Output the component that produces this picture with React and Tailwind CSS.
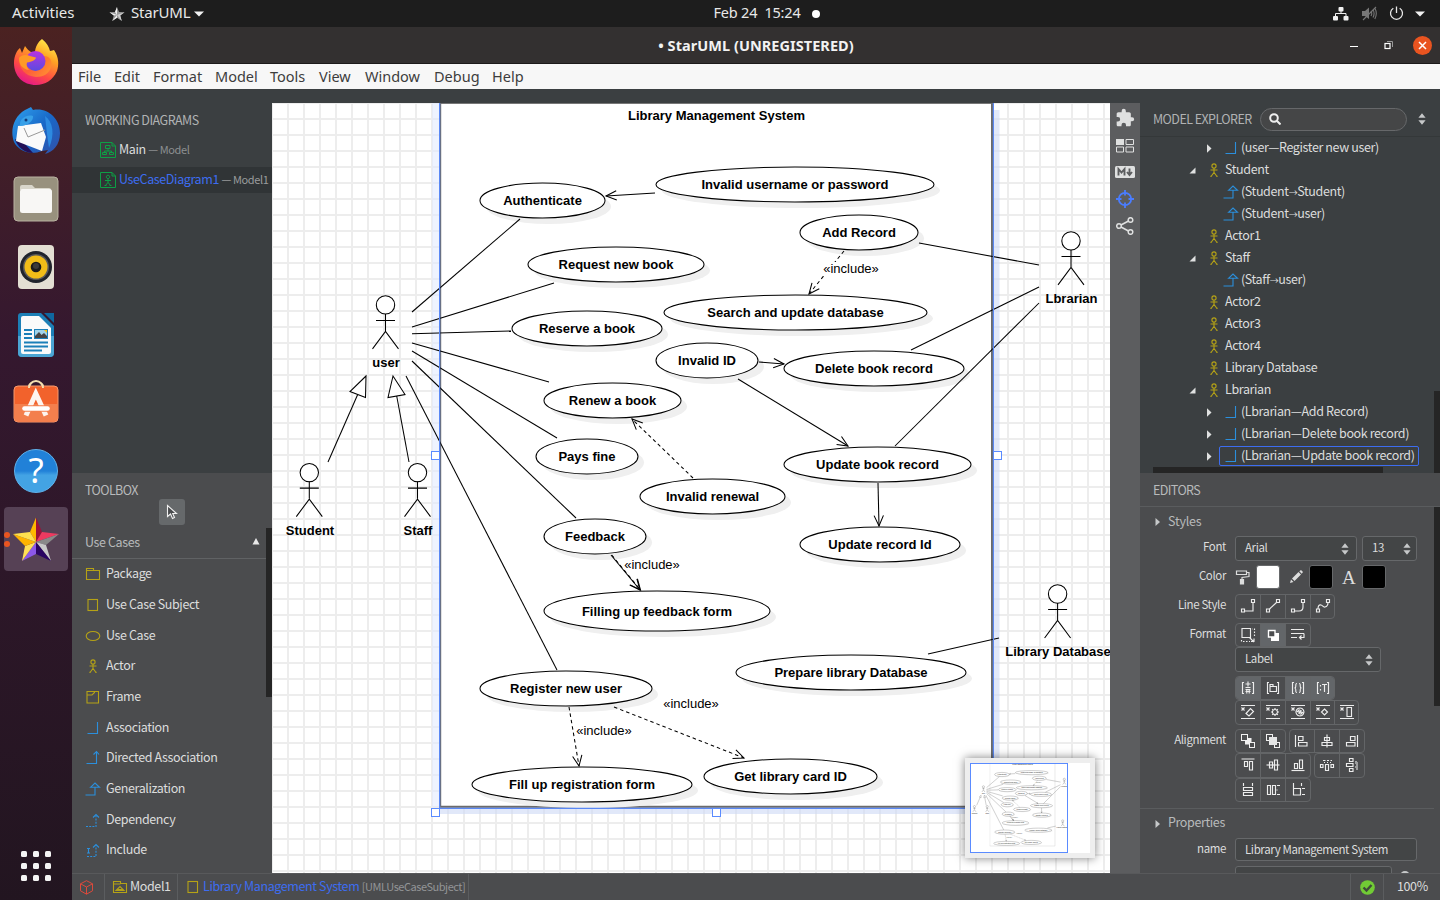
import React from "react";

const SANS = "font-['Noto_Sans_CJK_SC',sans-serif]";
const UBU = "font-['Noto_Sans',sans-serif]";

/* ---------- diagram data ---------- */

const useCases = [
  ["Authenticate", 480, 605, 183, 218],
  ["Invalid username or password", 656, 934, 167, 202],
  ["Request new book", 528, 704, 247, 282],
  ["Reserve a book", 512, 662, 311, 346],
  ["Add Record", 800, 918, 215, 250],
  ["Search and update database", 664, 927, 295, 330],
  ["Invalid ID", 656, 758, 343, 378],
  ["Delete book record", 784, 964, 351, 386],
  ["Renew a book", 544, 681, 383, 418],
  ["Pays fine", 536, 638, 439, 474],
  ["Update book record", 784, 971, 447, 482],
  ["Invalid renewal", 640, 785, 479, 514],
  ["Feedback", 544, 646, 519, 554],
  ["Update record Id", 800, 960, 527, 562],
  ["Filling up feedback form", 544, 770, 591, 631],
  ["Register new user", 480, 652, 671, 706],
  ["Prepare library Database", 736, 966, 655, 690],
  ["Get library card ID", 704, 877, 759, 794],
  ["Fill up registration form", 472, 692, 767, 802],
];

const actors = [
  ["user", 385.5, 304.9, 386],
  ["Student", 309.3, 472.6, 310],
  ["Staff", 417.5, 472.6, 418],
  ["Lbrarian", 1071, 240.9, 1071.5],
  ["Library Database", 1057.6, 594, 1058],
];

const associations = [
  [412, 312, 520, 219],
  [412, 327, 554, 283],
  [412, 333.7, 511, 331],
  [412, 343, 549, 382],
  [412, 351, 557, 438],
  [412, 361, 576, 518],
  [406, 376, 557, 670],
  [919, 243, 1039, 265],
  [911, 350, 1039, 287],
  [895, 446, 1039, 303],
  [928, 654, 999, 638],
  [328, 462, 357.7, 394.5],
  [409, 462, 396.7, 396],
];

const arrows = [
  [655, 193, 606, 196, false],
  [844, 251, 809, 294, true],
  [759, 362, 784, 364, false],
  [738, 379, 848, 446, false],
  [878, 483, 879, 526, false],
  [693, 478, 632, 419, true],
  [611, 555, 640, 590, false],
  [611.7, 555, 640.5, 590, true],
  [569, 707, 579, 766, true],
  [614, 707, 744, 758, true],
];

const includes = [
  [851, 273],
  [652, 569],
  [604, 735],
  [691, 708],
];

function headPath(x1, y1, x2, y2) {
  const a = Math.atan2(y1 - y2, x1 - x2);
  const p = (d) => `${x2 + 11.5 * Math.cos(a + d)},${y2 + 11.5 * Math.sin(a + d)}`;
  return `M${p(0.42)} L${x2},${y2} L${p(-0.42)}`;
}

function Diagram({ thin = 1.05, frame = "#6b6b6b" }) {
  return (
    <g>
      <rect x="440" y="103.5" width="552.5" height="703" fill="#fff" />
      <path d="M440.5 103.5H992" stroke="#777" strokeWidth="1" />
      <path d="M440.5 103V807" stroke={frame} strokeWidth="1.4" />
      <path d="M992 103V807" stroke={frame} strokeWidth="2" />
      <path d="M440 806.8H993" stroke={frame} strokeWidth="2" />
      {useCases.map(([t, l, r, a, b]) => (
        <g key={t}>
          <ellipse cx={(l + r) / 2 + 6} cy={(a + b) / 2 + 6} rx={(r - l) / 2} ry={(b - a) / 2} fill="#efefef" />
          <ellipse cx={(l + r) / 2} cy={(a + b) / 2} rx={(r - l) / 2} ry={(b - a) / 2} fill="#fff" stroke="#000" strokeWidth={thin} />
        </g>
      ))}
      <g stroke="#000" strokeWidth={thin} fill="none">
        {associations.map((l, i) => (
          <line key={i} x1={l[0]} y1={l[1]} x2={l[2]} y2={l[3]} />
        ))}
        {arrows.map(([a, b, c, d, dash], i) => (
          <g key={i}>
            <line x1={a} y1={b} x2={c} y2={d} strokeDasharray={dash ? "3.5 3" : undefined} />
            <path d={headPath(a, b, c, d)} />
          </g>
        ))}
        <path d="M366 376L350 391.5L365.5 397.5Z" fill="#fff" />
        <path d="M393 376L388 397.5L405 394.5Z" fill="#fff" />
        {actors.map(([t, x, y]) => (
          <g key={t}>
            <circle cx={x} cy={y} r="9.2" fill="#fff" />
            <path d={`M${x} ${y + 9}V${y + 26}M${x - 9.5} ${y + 15.5}H${x + 9.5}M${x - 13} ${y + 44}L${x} ${y + 26.5}L${x + 13} ${y + 44}`} />
          </g>
        ))}
      </g>
      <g fontFamily="'Liberation Sans', Arial, sans-serif" fontSize="13" textAnchor="middle" fill="#000">
        <g fontWeight="700">
          <text x="716.5" y="120">Library Management System</text>
          {useCases.map(([t, l, r, a, b]) => (
            <text key={t} x={(l + r) / 2} y={(a + b) / 2 + 4.5}>{t}</text>
          ))}
          {actors.map(([t, , y, lx]) => (
            <text key={t} x={lx} y={Math.round(y + 62)}>{t}</text>
          ))}
        </g>
        <rect x="823" y="262" width="56" height="14" fill="#fff" />
        {includes.map(([x, y]) => (
          <text key={x} x={x} y={y}>«include»</text>
        ))}
      </g>
    </g>
  );
}

function Canvas() {
  return (
    <div className="relative h-[770px] w-[838px] shrink-0 overflow-hidden bg-white">
      <svg width="838" height="770" viewBox="272 103 838 770" className="block">
        <defs>
          <pattern id="grid" x="271" y="102" width="16" height="16" patternUnits="userSpaceOnUse">
            <path d="M1 0V16M0 1H16" stroke="#ededed" strokeWidth="2" fill="none" />
          </pattern>
        </defs>
        <rect x="272" y="103" width="838" height="770" fill="#fff" />
        <rect x="272" y="103" width="838" height="770" fill="url(#grid)" />
        <rect x="432" y="103" width="8" height="704" fill="#e0e9ff" fillOpacity="0.55" />
        <rect x="993" y="110" width="6.500" height="704" fill="#cdd8f5" fillOpacity="0.6" />
        <rect x="440" y="807" width="553" height="7" fill="#cdd8f5" fillOpacity="0.6" />
        <Diagram />
        <path d="M439.6 103V808.3H993.4V103" fill="none" stroke="#5a88f5" strokeWidth="1.2" />
        {[[435.5, 455.5], [997.5, 455.5], [435.5, 812.5], [716.5, 812.5]].map(([x, y]) => (
          <rect key={x + "-" + y} x={x - 4} y={y - 4} width="8" height="8" fill="#fff" stroke="#5a8bff" />
        ))}
      </svg>
      <div className="absolute left-[693px] top-[655px] h-[100px] w-[130px] bg-[#eeeeee] p-[5px] shadow-[0_0_9px_rgba(0,0,0,0.5)]">
        <div className="relative h-[90px] w-[120px] bg-white">
          <svg width="98" height="90" viewBox="272 103 830 763" className="block opacity-70">
            <Diagram thin={2.2} frame="#888" />
          </svg>
          <div className="absolute left-0 top-0 h-[90px] w-[98px] border border-[#5a8bff]" />
        </div>
      </div>
    </div>
  );
}

/* ---------- UML icons (16px) ---------- */

const Y = "#b5a216";
const B = "#2b8fdc";

function Uml({ kind, className = "" }) {
  const shapes = {
    package: <path d="M1.5 4.5V13.5H14.5V4.5H8.5V2.5H1.5V4.5H8.5" stroke={Y} />,
    subject: <rect x="3" y="2.5" width="9.5" height="11" stroke={Y} />,
    usecase: <ellipse cx="8" cy="8" rx="6.8" ry="4.5" stroke={Y} />,
    actor: (
      <g stroke={Y}>
        <circle cx="8" cy="4" r="2.1" />
        <path d="M8 6.2V10.5M4.5 8H11.5M5 14.5L8 10.5L11 14.5M4.2 14.3H6M10 14.3H11.8" />
      </g>
    ),
    frame: <path d="M2 2.5H13.5V14H2ZM2 6H7L9.5 3.5V2.5" stroke={Y} />,
    association: <path d="M2.5 13.5H12.5V2" stroke={B} />,
    directed: <path d="M1.5 13.5H11.5V1.5M8.5 4.5L11.5 1.5L14 4.5" stroke={B} />,
    generalization: <path d="M.5 14H10V6.3M5.5 6.3L10 2L14.5 6.3Z" stroke={B} />,
    dependency: (
      <g stroke={B}>
        <path d="M1 14.5H11V3" strokeDasharray="2 1.2" />
        <path d="M8 5.5L11 2.5L14 5.5" />
      </g>
    ),
    include: (
      <g stroke={B}>
        <path d="M2 14.5H11V3" strokeDasharray="2 1.2" />
        <path d="M8 5.5L11 2.5L14 5.5M2 6.5H5M3.5 6.5V11M2 11H5" />
      </g>
    ),
    model: <path d="M1.5 5V13.5H14.5V4.5H8.5V2.5H1.5V5H8.5M4 11.5L8 7.5L12 11.5ZM5 10.5H11" stroke={Y} />,
  };
  return (
    <svg width="16" height="16" viewBox="0 0 16 16" fill="none" strokeWidth="1.1" className={"shrink-0 " + className}>
      {shapes[kind]}
    </svg>
  );
}

function DiagramIcon({ actor }) {
  return (
    <svg width="16" height="16" viewBox="0 0 16 16" fill="none" stroke="#0d9f45" strokeWidth="1" className="shrink-0">
      <path d="M.5 .5H12L15.5 4V15.5H.5ZM12 .5V4H15.5" />
      {actor ? (
        <path d="M8 3.2a1.7 1.7 0 1 1-.01 0M8 6.6V10.3M5 8.5H11M5.5 13.5L8 10.3L10.5 13.5M4.5 13.5H6.5M9.5 13.5H11.5" />
      ) : (
        <path d="M5.5 3.5H10V6.5H5.5ZM8 6.5V9M4.5 10.5V9H11.5V10.5M2.5 10.5H6.5V12.5H2.5ZM9.5 10.5H13.5V12.5H9.5Z" />
      )}
    </svg>
  );
}

/* ---------- desktop chrome ---------- */

function TopBar() {
  return (
    <header className={"grid h-[27px] grid-cols-3 items-center bg-[#1d1d1d] text-[15px] leading-[25px] text-[#e8e8e8] " + UBU}>
      <div className="flex items-center">
        <span className="mb-[2px] ml-[12px] w-[97px] tracking-[0px]">Activities</span>
        <svg width="16" height="16" viewBox="0 0 16 16" className="mr-[6px]">
          <path d="M8 1L10 6L15.5 6.2L11.2 9.6L12.8 15L8 11.8L3.2 15L4.8 9.6L.5 6.2L6 6Z" fill="#9a9a9a" />
          <path d="M8 1V9L6 6ZM.5 6.2L8 9L4.8 9.6ZM3.2 15L8 9V11.8Z" fill="#f2f2f2" />
          <path d="M8 9L15.5 6.2L11.2 9.6L12.8 15Z" fill="#cfcfcf" />
        </svg>
        <span className="mb-[2px] tracking-[-0.2px]">StarUML</span>
        <svg width="10" height="6" viewBox="0 0 10 6" className="ml-[4px]"><path d="M0 .5H10L5 5.500Z" fill="#f2f2f2" /></svg>
      </div>
      <div className="flex items-center justify-center pl-[94px]">
        <span className="mb-[2px] whitespace-pre text-[14.500px] tracking-[-0.2px]">Feb 24  15:24</span>
        <span className="ml-[12px] h-2 w-2 rounded-full bg-white" />
      </div>
      <div className="flex items-center justify-end pr-[15px]">
        <svg width="16" height="14" viewBox="0 0 16 14" className="mr-[13px]">
          <g fill="#f2f2f2"><rect x="5.5" y="0" width="5" height="4.5" rx="1" /><rect x="0" y="9" width="5" height="4.5" rx="1" /><rect x="10.5" y="9" width="5" height="4.5" rx="1" /></g>
          <path d="M8 4V6.5M2.5 9V6.5H13V9" stroke="#f2f2f2" fill="none" />
        </svg>
        <svg width="15" height="15" viewBox="0 0 15 15" className="mr-[12px]">
          <path d="M0 5H3L7 1.5V13L3 10H0Z" fill="#777" />
          <path d="M9 5Q10.5 7.5 9 10M11 3.5Q13.2 7.5 11 11.5M12.8 2Q15.8 7.5 12.8 13M1 14L14 1" stroke="#777" fill="none" strokeWidth="1.1" />
        </svg>
        <svg width="15" height="15" viewBox="0 0 15 15" className="mr-[11px]" fill="none" stroke="#e8e8e8" strokeWidth="1.3">
          <path d="M4.3 2.2A6 6 0 1 0 10.7 2.2M7.5 .5V7" />
        </svg>
        <svg width="10" height="6" viewBox="0 0 10 6"><path d="M0 .5H10L5 5.5Z" fill="#f2f2f2" /></svg>
      </div>
    </header>
  );
}

function Firefox() {
  return (
    <svg width="46" height="48" viewBox="0 0 46 48">
      <defs>
        <linearGradient id="ff1" x1=".8" y1="0" x2=".3" y2="1"><stop offset="0" stopColor="#fff44f" /><stop offset=".35" stopColor="#ffa224" /><stop offset=".7" stopColor="#ff4a45" /><stop offset="1" stopColor="#e3168b" /></linearGradient>
        <linearGradient id="ff2" x1="0" y1="0" x2="0" y2="1"><stop offset="0" stopColor="#b833e1" /><stop offset="1" stopColor="#5b4be0" /></linearGradient>
        <linearGradient id="ff3" x1="0" y1="0" x2="1" y2="1"><stop offset="0" stopColor="#ff8a1e" /><stop offset=".5" stopColor="#ff6a30" /><stop offset="1" stopColor="#ffb02c" /></linearGradient>
      </defs>
      <path d="M29 1C34 5 36 9 37 13C39 13 40 12 41 12C46 19 46 27 44 33C40 42 32 47 23 47C10 47 1 38 1 25C1 18 4 12 7 10L9 15L12 8C14 11 16 13 18 14L22 15C22 9 25 4 29 1Z" fill="url(#ff1)" />
      <path d="M6 20C11 15 15 18 23 20C36 14 40 22 38 29C36 36 30 39 23 39C12 38 6 31 6 20Z" fill="url(#ff3)" opacity=".7" />
      <circle cx="22.500" cy="23" r="10" fill="url(#ff2)" />
      <path d="M6 20C8 17 13 16 17 18L23 19.500C22.500 22 19 24 14 24.500C13 27 14 30 16 32C9 31 6 26 6 20Z" fill="#ff9a26" />
    </svg>
  );
}

function Thunderbird() {
  return (
    <svg width="50" height="50" viewBox="0 0 50 50">
      <defs><linearGradient id="tb" x1="0" y1="0" x2="1" y2="1"><stop offset="0" stopColor="#2fa3ef" /><stop offset=".5" stopColor="#1968c8" /><stop offset="1" stopColor="#3250a8" /></linearGradient></defs>
      <path d="M14 4L20 1L22 4C36 1 49 12 49 27C49 39 42 46 34 48L37 44L31 45C18 50 7 44 3 36C-1 25 2 11 14 4Z" fill="url(#tb)" />
      <path d="M4 33C6 41 14 47 22 47L14 38Z" fill="#221056" />
      <path d="M7 20L30 17L35 31L31 45L5 35Z" fill="#fafafa" />
      <path d="M13 22L17 31L34 24" fill="none" stroke="#999" />
      <path d="M9 20C8 14 14 8 22 10C23 14 17 20 9 20Z" fill="#38a0e8" />
      <path d="M34 10C42 16 44 28 38 42L36 28Z" fill="#2d8ae0" />
      <circle cx="15" cy="14" r="1.5" fill="#123c7c" />
    </svg>
  );
}

function Files() {
  return (
    <svg width="46" height="46" viewBox="0 0 46 46">
      <rect x="1" y="1" width="44" height="44" rx="4" fill="#98917e" stroke="#b9b2a1" />
      <path d="M7 14V11Q7 9 9 9H19L22 12H36Q38 12 38 14Z" fill="#d9d6cb" />
      <rect x="7" y="13" width="32" height="24" rx="2.5" fill="#f8f7f5" />
    </svg>
  );
}

function Rhythmbox() {
  return (
    <svg width="38" height="46" viewBox="0 0 38 46">
      <rect x="1" y="1" width="36" height="44" rx="4" fill="#e3dfd3" />
      <circle cx="19" cy="23" r="16" fill="#20242c" />
      <circle cx="19" cy="23" r="13" fill="#5b5b5b" />
      <circle cx="19" cy="23" r="11.5" fill="#f1bd18" />
      <circle cx="19" cy="23" r="5.3" fill="#1b1b1b" />
      <circle cx="19" cy="22" r="3" fill="#3a3a3a" />
    </svg>
  );
}

function Writer() {
  return (
    <svg width="38" height="46" viewBox="0 0 38 46">
      <path d="M4 1H24L37 14V41Q37 45 33 45H5Q1 45 1 41V4Q1 1 4 1Z" fill="#1c7fb6" />
      <path d="M1 24H37V41Q37 45 33 45H5Q1 45 1 41Z" fill="#4ba5d3" />
      <path d="M6 4H22L34 16V40Q34 42 32 42H6Q4 42 4 40V6Q4 4 6 4Z" fill="#fafafa" />
      <path d="M27 1H37V11Z" fill="#0f679f" />
      <path d="M7 18H15M7 22H15M7 26H15M7 30.500H31M7 34.500H31M7 38.500H25" stroke="#1b7fb8" strokeWidth="2" />
      <rect x="17" y="17" width="14" height="10" fill="#1b7fb8" /><rect x="18" y="18" width="12" height="8" fill="#9fd3ea" />
      <path d="M18 26V24L22 20L24.500 23L27 21L30 24V26Z" fill="#444" /><path d="M27 18H30V21Z" fill="#f5c211" />
    </svg>
  );
}

function Software() {
  return (
    <svg width="46" height="44" viewBox="0 0 46 44">
      <path d="M16 11C15 -1 31 -1 30 11" fill="none" stroke="#f4dfb0" strokeWidth="2" />
      <rect x="1" y="7" width="44" height="36" rx="4" fill="#f2622c" stroke="#f79a6e" />
      <path d="M1.500 25H44.500V39Q44.500 42.500 41 42.500H5Q1.500 42.500 1.500 39Z" fill="#f37f4d" />
      <path d="M16 9C16 7 16 6 17 5M30 9C30 7 30 6 29 5" stroke="#f4dfb0" strokeWidth="2" fill="none" />
      <path d="M13 36.500L22.800 14.500L33 36.500" fill="none" stroke="#fdf4ef" strokeWidth="5" />
      <path d="M10.500 29.500H35.500" stroke="#f37f4d" strokeWidth="6.400" strokeLinecap="round" />
      <path d="M11.500 29.500H34.500" stroke="#fff" strokeWidth="4.600" strokeLinecap="round" />
    </svg>
  );
}

function Help() {
  return (
    <div className="flex h-[44px] w-[44px] items-center justify-center rounded-full border border-[#5fb2ec] bg-linear-to-b from-[#2181d8] from-50% to-[#43a3e4] to-60% font-['Noto_Sans',sans-serif] text-[35px] leading-none text-white">
      <span className="-mt-1">?</span>
    </div>
  );
}

function Star() {
  return (
    <svg width="46" height="46" viewBox="0 0 46 46" className="mt-[2px]">
      <g>
        <path d="M23 .5V25L17 15Z" fill="#ffb800" /><path d="M23 .5V25L29 15Z" fill="#9c1138" />
        <path d="M29 15L46 17L23 25Z" fill="#ee3a60" /><path d="M46 17L33 28L23 25Z" fill="#898989" />
        <path d="M33 28L38 44L23 25Z" fill="#c9c9c9" /><path d="M38 44L23 37V25Z" fill="#2a0562" />
        <path d="M23 25V37L9 44Z" fill="#8c58e8" /><path d="M23 25L9 44L12 29Z" fill="#ffdf57" />
        <path d="M23 25L12 29L0 17Z" fill="#ffb300" /><path d="M0 17L17 15L23 25Z" fill="#ffe04f" />
      </g>
    </svg>
  );
}

function Dock() {
  return (
    <nav className="flex w-[72px] shrink-0 flex-col items-center bg-linear-to-b from-[#4b2221] via-[#35182f] via-35% to-[#221520] pt-[2px]">
      <div className="flex h-[66px] items-center"><Firefox /></div>
      <div className="flex h-[72px] items-center"><Thunderbird /></div>
      <div className="flex h-[64px] items-center"><Files /></div>
      <div className="flex h-[72px] items-center"><Rhythmbox /></div>
      <div className="flex h-[64px] items-center"><Writer /></div>
      <div className="flex h-[68px] items-center"><Software /></div>
      <div className="flex h-[72px] items-center"><Help /></div>
      <div className="relative flex h-[64px] w-[64px] items-center justify-center rounded-[4px] bg-[#564155]">
        <Star />
        <span className="absolute left-0 top-[25px] h-[6px] w-[6px] rounded-full bg-[#e95420]" />
        <span className="absolute left-0 top-[34px] h-[6px] w-[6px] rounded-full bg-[#e95420]" />
      </div>
      <div className="mt-auto mb-[19px] grid grid-cols-3 gap-[6px]">
        {Array.from({ length: 9 }, (_, i) => (
          <span key={i} className="h-[6px] w-[6px] rounded-[1.500px] bg-[#f4f4f4]" />
        ))}
      </div>
    </nav>
  );
}

function TitleBar() {
  return (
    <div className={"relative flex h-[37px] items-center border-b border-[#1c1a1a] bg-[#333030] text-[14.500px] font-bold text-[#f2f2f2] " + UBU}>
      <span className="mt-[1px] flex-1 text-center tracking-[0.050px]">• StarUML (UNREGISTERED)</span>
      <div className="absolute right-[8px] flex items-center">
        <span className="mr-[26px] mt-[3px] h-[1.500px] w-[8px] bg-white" />
        <svg width="9" height="9" viewBox="0 0 9 9" className="mr-[20px]" fill="none"><path d="M3 .5H8.500V6" stroke="#999" /><rect x="1" y="2.500" width="5" height="5" stroke="#fff" strokeWidth="1.200" /></svg>
        <span className="flex h-[19px] w-[19px] items-center justify-center rounded-full bg-[#e95420]">
          <svg width="9" height="9" viewBox="0 0 9 9" stroke="#fff" strokeWidth="1.500"><path d="M1 1L8 8M8 1L1 8" /></svg>
        </span>
      </div>
    </div>
  );
}

function MenuBar() {
  return (
    <div className={"flex h-[25px] items-center bg-[#f7f7f7] pl-[6px] text-[14.500px] leading-[25px] text-[#3d3d3d] " + UBU}>
      <span className="w-[36px]">File</span>
      <span className="w-[39px]">Edit</span>
      <span className="w-[62px]">Format</span>
      <span className="w-[55px]">Model</span>
      <span className="w-[49px]">Tools</span>
      <span className="w-[46px]">View</span>
      <span className="w-[69px]">Window</span>
      <span className="w-[58px]">Debug</span>
      <span>Help</span>
    </div>
  );
}

/* ---------- left column ---------- */

const tools = [
  ["package", "Package"],
  ["subject", "Use Case Subject"],
  ["usecase", "Use Case"],
  ["actor", "Actor"],
  ["frame", "Frame"],
  ["association", "Association"],
  ["directed", "Directed Association"],
  ["generalization", "Generalization"],
  ["dependency", "Dependency"],
  ["include", "Include"],
];

function LeftColumn() {
  return (
    <aside className="flex w-[200px] shrink-0 flex-col text-[12.500px] tracking-[-0.380px] text-[#dcdddd]">
      <section className="h-[384px] bg-[#3b3f41] pt-[21px]">
        <h2 className="pl-[13px] leading-[20px] tracking-[-0.500px] text-[#b0b2b3]">WORKING DIAGRAMS</h2>
        <div className="mt-[7px] flex h-[26px] items-center gap-[3px] pl-[28px]">
          <DiagramIcon />
          <span className="mb-[2px]">Main <span className="text-[11px] text-[#8d9091]">— Model</span></span>
        </div>
        <div className="mt-[4px] flex h-[26px] items-center gap-[3px] whitespace-nowrap bg-[#303436] pl-[28px] text-[#3d6df0]">
          <DiagramIcon actor />
          <span className="mb-[2px]">UseCaseDiagram1 <span className="text-[11px] text-[#9a9c9d]">— Model1</span></span>
        </div>
      </section>
      <section className="h-[400px] overflow-hidden bg-[#4b4c4e]">
        <h2 className="pl-[13px] pt-[7px] leading-[20px] tracking-[-0.600px] text-[#b8babb]">TOOLBOX</h2>
        <div className="ml-[87px] mt-[-1px] flex h-[26px] w-[26px] items-center justify-center rounded-[3px] bg-[#66696b]">
          <svg width="12" height="16" viewBox="0 0 12 16"><path d="M1.500 1.500V12.500L4.500 10L6.500 14.500L8.500 13.500L6.700 9.500H10.500Z" fill="#4a4c4e" stroke="#f0f0f0" strokeWidth="1.100" /></svg>
        </div>
        <div className="flex">
          <div className="w-[194px]">
            <div className="flex h-[34px] items-center justify-between border-b border-[#606264] pl-[13px] pr-[6px]">
              <span className="mt-[1px] text-[#b8babb]">Use Cases</span>
              <svg width="8" height="7" viewBox="0 0 8 7" className="mb-[1px]"><path d="M4 0L7.500 6.500H.5Z" fill="#e8e8e8" /></svg>
            </div>
            {tools.map(([k, t]) => (
              <div key={t} className="flex h-[30.670px] items-center gap-[5px] pl-[13px]">
                <Uml kind={k} />
                <span className="mb-[1px]">{t}</span>
              </div>
            ))}
          </div>
          <div className="mt-[3px] h-[169px] w-[6px] bg-[#252525]" />
        </div>
      </section>
    </aside>
  );
}

/* ---------- right column ---------- */

function SideTools() {
  return (
    <div className="flex w-[30px] shrink-0 flex-col items-center bg-[#5c5d5f] pt-[5px]">
      <svg width="20" height="20" viewBox="0 0 24 24" className="mb-[11px]" fill="#dfe0e0"><path d="M20.500 11H19V7c0-1.100-.9-2-2-2h-4V3.500a2.500 2.500 0 0 0-5 0V5H4c-1.100 0-2 .9-2 2v3.800h1.500a2.700 2.700 0 0 1 0 5.400H2V20c0 1.100.9 2 2 2h3.800v-1.500a2.700 2.700 0 0 1 5.400 0V22H17c1.100 0 2-.9 2-2v-4h1.500a2.500 2.500 0 0 0 0-5z" /></svg>
      <svg width="18" height="14" viewBox="0 0 18 14" className="mb-[13px]" fill="none" stroke="#dfe0e0"><path d="M10 .5H17.500V5.500H10ZM.5 8H7.500V13H.5ZM10 8H17.500V13H10Z" /><rect x=".5" y=".5" width="7" height="5" fill="#dfe0e0" /></svg>
      <svg width="20" height="12" viewBox="0 0 20 12" className="mb-[12px]"><rect width="20" height="12" rx="1.500" fill="#dfe0e0" /><path d="M3.500 9.500V3L6.500 6.500L9.500 3V9.500M14.500 2.500V8M12 6L14.500 9L17 6" fill="none" stroke="#5c5d5f" strokeWidth="1.900" /></svg>
      <svg width="18" height="18" viewBox="0 0 18 18" className="mb-[9px]" fill="none" stroke="#4a7dff" strokeWidth="1.800"><circle cx="9" cy="9" r="6.200" /><path d="M9 0V5.500M9 12.500V18M0 9H5.500M12.500 9H18" /></svg>
      <svg width="18" height="18" viewBox="0 0 18 18" fill="none" stroke="#dfe0e0" strokeWidth="1.500"><circle cx="3" cy="9" r="2.300" /><circle cx="14.500" cy="3" r="2.300" /><circle cx="14.500" cy="15" r="2.300" /><path d="M5 8L12.500 4M5 10L12.500 14" /></svg>
    </div>
  );
}

const tree = [
  [2, "right", "association", "(user—Register new user)"],
  [1, "down", "actor", "Student"],
  [2, "", "generalization", "(Student→Student)"],
  [2, "", "generalization", "(Student→user)"],
  [1, "", "actor", "Actor1"],
  [1, "down", "actor", "Staff"],
  [2, "", "generalization", "(Staff→user)"],
  [1, "", "actor", "Actor2"],
  [1, "", "actor", "Actor3"],
  [1, "", "actor", "Actor4"],
  [1, "", "actor", "Library Database"],
  [1, "down", "actor", "Lbrarian"],
  [2, "right", "association", "(Lbrarian—Add Record)"],
  [2, "right", "association", "(Lbrarian—Delete book record)"],
  [2, "right", "association", "(Lbrarian—Update book record)"],
];

function TreeText({ text }) {
  const [a, b] = text.split("→");
  if (b === undefined) return <span className="mb-[2px]">{text}</span>;
  return (
    <span className="mb-[2px]">{a}<span className="text-[9px]">→</span>{b}</span>
  );
}

function Updown({ className = "" }) {
  return (
    <svg width="8" height="12" viewBox="0 0 8 12" className={"shrink-0 " + className}>
      <path d="M4 .3L7.600 4.700H.4ZM4 11.700L7.600 7.300H.4Z" fill="#c6c8c9" />
    </svg>
  );
}

function Explorer() {
  return (
    <section className="h-[384px] overflow-hidden bg-[#3b3f41]">
      <div className="flex h-[48px] items-center border-b border-[#343839] pl-[13px] pt-[13px]">
        <h2 className="mt-[1px] w-[107px] whitespace-nowrap tracking-[-0.550px] text-[#b0b2b3]">MODEL EXPLORER</h2>
        <div className="flex h-[23px] w-[147px] items-center rounded-full border border-[#66686a] bg-[#454647] pl-[8px]">
          <svg width="12" height="12" viewBox="0 0 12 12" fill="none" stroke="#eeeeee" strokeWidth="2"><circle cx="5" cy="5" r="3.800" /><path d="M7.800 7.800L11.500 11.500" /></svg>
        </div>
        <Updown className="ml-[11px]" />
      </div>
      <div className="flex h-[330px]">
        <div className="w-[294px] shrink-0">
          {tree.map(([level, open, kind, text], i) => (
            <div key={i} className={"flex h-[22px] items-center whitespace-nowrap " + (level === 2 ? "pl-[66px]" : "pl-[49px]")}>
              <span className="w-[13px] shrink-0">
                {open === "right" && <svg width="6" height="9" viewBox="0 0 6 9"><path d="M1 .3L5.500 4.500L1 8.700Z" fill="#e0e1e1" /></svg>}
                {open === "down" && <svg width="7" height="7" viewBox="0 0 7 7"><path d="M6.500 .5V6.500H.5Z" fill="#e0e1e1" /></svg>}
              </span>
              <span className={"flex items-center rounded-[2px] border " + (level === 2 ? "h-[20px] gap-[2px] pl-[3px] pr-[3px] " : "gap-[3px] pl-[3px] ") + (i === 14 ? "border-[#3d6df0]" : "border-transparent")}>
                <Uml kind={kind} />
                <TreeText text={text} />
              </span>
            </div>
          ))}
        </div>
        <div className="mt-[254px] h-[82px] w-[6px] bg-[#252525]" />
      </div>
      <div className="ml-[13px] h-[6px] w-[230px] bg-[#252525]" />
    </section>
  );
}

const sq = "M1.500 11H4.500V14H1.500ZM11.500 1.500H14.500V4.500H11.500Z";
const cut = "M1 1.500H15M1 14.500H15M1.500 3.500L4.500 6.500M4.500 3.500L1.500 6.500";
const bracket = "M4 2.500H2.500V13.500H4M12 2.500H13.500V13.500H12";
const icons = {
  rect: [sq, "M4.500 13H13V4.500"],
  oblique: [sq, "M4.500 11L11.500 4.500"],
  round: [sq, "M4.500 13H9Q13 13 13 9V4.500"],
  curve: [sq, "M3 11C3 8 4 6.500 6 7C8 7.500 8 9.500 10 9C12 8.500 13 7 13 4.500"],
  resize: ["M2 1.500H10.500V10.500H2Z", "M9.500 10.500L14 15M11 14.500H14V11.500"],
  wrap: ["M1 2.500H14M1 6.500H14M1 10.500H7M14 6.500V10.500H9.500", "M11.500 8.500L9.500 10.500L11.500 12.500"],
  vis: [bracket, "M8 1.500V6.500M5.500 4H10.500M5.500 7.500H10.500M5.500 9.500H10.500M5.500 11.500H10.500M6.800 9V13.500M9.200 9V13.500"],
  ns: [bracket, "M5 4.500H8V6.500H11.500V11.500H5ZM5 6.500H8"],
  prop: [bracket, "M7 3.500Q5.500 3.500 5.800 6Q5.800 8 4.500 8Q5.800 8 5.800 10Q5.500 12.500 7 12.500M9 3.500Q10.500 3.500 10.200 6Q10.200 8 11.500 8Q10.200 8 10.200 10Q10.500 12.500 9 12.500"],
  type: [bracket, "M5.500 5V6.500M5.500 9V10.500M7 4.500H12M9.500 4.500V12"],
  sAttr: [cut, "M6 9.500L10.500 4.500L13.500 7.500L9 12Z"],
  sOp: [cut, "M10 5.500A2.500 2.500 0 1 1 9.900 5.500M10 4V6M10 10V12M6 8H8M12 8H14M7.200 5.200L8.500 6.500M11.500 9.500L12.800 10.800M12.800 5.200L11.500 6.500M8.500 9.500L7.200 10.800"],
  sRec: [cut, "M10 4A4 4 0 1 1 9.900 4M7 8L9 6V10L11 6V10L13 8"],
  sLit: [cut, "M9.500 5L12.500 8L9.500 11L6.500 8Z"],
  sRes: [cut, "M8 3.500H12.500V12.500H8Z"],
  aL: ["M1.500 2V14", "M4.500 3.500H9V7.500H4.500ZM4.500 9.500H13V13H4.500Z"],
  aC: ["M8 1.500V14.500", "M5.500 4.500H10.500V7.500H5.500ZM3 9.500H13V12.500H3Z"],
  aR: ["M13.500 2V14", "M6.500 3.500H11V7.500H6.500ZM2.500 9.500H11V13H2.500Z"],
  aT: ["M1.500 2H14.500", "M4.500 4.500H7.500V9.500H4.500ZM9.500 4.500H12.500V13H9.500Z"],
  aM: ["M1.500 8H14.500", "M4.500 5H7.500V11H4.500ZM9.500 3H12.500V13H9.500Z"],
  aB: ["M1.500 13.500H14.500", "M4.500 6.500H7.500V11.500H4.500ZM9.500 3H12.500V11.500H9.500Z"],
  dH: ["M4 3.500H6.500M8 3.500H10M11.500 3.500H13M5 5.500H6M8 5.500H9M11 5.500H12", "M1.500 7.500H4V10.500H1.500ZM6.500 7.500H9.500V13.500H6.500ZM12 7.500H14.500V10.500H12Z"],
  dV: ["M12 4V5M11 6H14M12 8H14M11 10H14M12 12H14", "M5.500 1.500H9V4.500H5.500ZM2.500 6.500H9V9.500H2.500ZM5.500 11.500H9V14.500H5.500Z"],
  eH: ["M3.500 1V4M12.500 1V4", "M3.500 5.500H12.500V8.500H3.500ZM3.500 10.500H12.500V13.500H3.500Z"],
  eW: ["M12 3.500H15M12 12.500H15M12 7.500V8.500", "M2.500 3.500H5.500V12.500H2.500ZM7.500 3.500H10.500V12.500H7.500Z"],
  eS: ["M3.500 1V4M11.500 1V4M12 6.500H15M12 12.500H15", "M3.500 6.500H10.500V13H3.500ZM3.500 4V6"],
};

function Icon({ name }) {
  if (name === "shadow")
    return (
      <svg width="16" height="16" viewBox="0 0 16 16"><path d="M6 6H14V14H6Z" fill="#fff" /><path d="M3.500 3.500H10V10H3.500Z" fill="#4b4c4e" stroke="#fff" strokeWidth="1.400" /></svg>
    );
  if (name === "front" || name === "back")
    return (
      <svg width="16" height="16" viewBox="0 0 16 16" fill="none" stroke="#f0f0f0">
        {name === "front" && <rect x="5" y="5" width="6.500" height="6.500" fill="#f0f0f0" stroke="none" />}
        <rect x="1.500" y="1.500" width="6" height="6" fill="#4b4c4e" />
        <rect x="9.500" y="9.500" width="5" height="5" fill="#4b4c4e" />
        {name === "back" && <rect x="4" y="4" width="8" height="8" fill="#e4e5e5" stroke="none" />}
      </svg>
    );
  const [a, b] = icons[name];
  return (
    <svg width="16" height="16" viewBox="0 0 16 16" fill="none" stroke="#ececec" strokeWidth="1.150">
      <path d={a} />
      <path d={b} />
      {name === "resize" && <path d="M1.500 13V14.500H10M14.500 9V2H12" strokeDasharray="1.500 1.500" />}
    </svg>
  );
}

function Group({ items, on = [] }) {
  return (
    <div className="flex overflow-hidden rounded-[4px] border border-[#636567]">
      {items.map((n, i) => (
        <span key={n} className={"flex items-start pl-[4px] pt-[3px] " + (i ? "border-l border-[#636567] " : "") + (i === 1 || i === 2 ? "w-[25px] " : "w-[24px] ") + (on.includes(n) ? "bg-[#636669]" : "")}>
          <Icon name={n} />
        </span>
      ))}
    </div>
  );
}

function Select({ text, className }) {
  return (
    <div className={"flex items-center justify-between rounded-[3px] border border-[#66686a] bg-[#434546] pl-[9px] text-[11.500px] " + className}>
      <span className="mb-[1px]">{text}</span>
      <Updown />
    </div>
  );
}

function Row({ label, className, children }) {
  return (
    <div className={"flex " + className}>
      <span className="w-[86px] shrink-0 text-right text-[11.500px] leading-[21px]">{label}</span>
      <div className="ml-[9px] flex">{children}</div>
    </div>
  );
}

const swatch = "h-[24px] w-[24px] rounded-[3px] border border-[#66686a] ";

function Editors() {
  return (
    <section className="flex h-[400px] flex-col overflow-hidden bg-[#4b4c4e]">
      <h2 className="h-[34px] shrink-0 border-b border-[#5a5c5e] pl-[13px] pt-[7px] leading-[20px] tracking-[-0.600px] text-[#b8babb]">EDITORS</h2>
      <div className="flex min-h-0 flex-1">
        <div className="w-[294px] shrink-0">
          <div className="flex h-[29px] items-center pl-[15px] text-[#b8babb]">
            <svg width="5" height="8" viewBox="0 0 5 8" className="mr-[8px]"><path d="M.5 0L5 4L.5 8Z" fill="#c6c8c9" /></svg><span className="tracking-[-0.200px]">Styles</span>
          </div>
          <Row label="Font" className="h-[29px]">
            <Select text="Arial" className="h-[25px] w-[122px] pr-[7px]" />
            <Select text="13" className="ml-[5px] h-[25px] w-[55px] pr-[5px]" />
          </Row>
          <Row label="Color" className="h-[29px]">
            <svg width="16" height="16" viewBox="0 0 16 16" className="mt-[4px]" fill="none" stroke="#dcdddd" strokeWidth="1.200"><path d="M1.500 2H11.500V5.500H1.500ZM11.500 3.500H14V7.500L7 8.500V10.500" /><path d="M5.500 10.500H8.500V15H5.500Z" fill="#dcdddd" /></svg>
            <span className={swatch + "ml-[5px] bg-white"} />
            <svg width="16" height="16" viewBox="0 0 16 16" className="ml-[8px] mt-[4px]" fill="#dcdddd"><path d="M2 14L3 10.500L5.500 13ZM4 9.500L10.500 3L13 5.500L6.500 12ZM11.300 2.300L13 1L15 3L13.700 4.700Z" /></svg>
            <span className={swatch + "ml-[5px] bg-black"} />
            <span className="ml-[9px] w-[15px] font-['Liberation_Serif',serif] text-[19px] leading-[26px]">A</span>
            <span className={swatch + "ml-[5px] bg-black"} />
          </Row>
          <Row label="Line Style" className="h-[29px]"><div className="flex h-[25px]"><Group items={["rect", "oblique", "round", "curve"]} /></div></Row>
          <Row label="Format" className="h-[24px]"><div className="flex h-[24px]"><Group items={["resize", "shadow", "wrap"]} on={["shadow"]} /></div></Row>
          <Row label="" className="h-[29px]"><Select text="Label" className="h-[25px] w-[146px] pr-[7px]" /></Row>
          <Row label="" className="h-[24px]"><Group items={["vis", "ns", "prop", "type"]} on={["vis", "prop", "type"]} /></Row>
          <Row label="" className="h-[29px]"><div className="flex h-[25px]"><Group items={["sAttr", "sOp", "sRec", "sLit", "sRes"]} /></div></Row>
          <Row label="Alignment" className="h-[24px]"><div className="flex h-[24px] gap-[3px]"><Group items={["front", "back"]} /><Group items={["aL", "aC", "aR"]} /></div></Row>
          <Row label="" className="h-[25px]"><div className="flex h-[25px] gap-[3px]"><Group items={["aT", "aM", "aB"]} /><Group items={["dH", "dV"]} /></div></Row>
          <Row label="" className="h-[24px]"><Group items={["eH", "eW", "eS"]} /></Row>
          <div className="mt-[6px] flex h-[30px] items-center border-t border-[#5a5c5e] pl-[15px] text-[#b8babb]">
            <svg width="5" height="8" viewBox="0 0 5 8" className="mr-[8px]"><path d="M.5 0L5 4L.5 8Z" fill="#c6c8c9" /></svg><span className="mb-[2px]">Properties</span>
          </div>
          <Row label="name" className="h-[28px]">
            <div className="flex h-[23px] w-[182px] items-center rounded-[3px] border border-[#66686a] bg-[#434546] pl-[9px] text-[11.500px]">Library Management System</div>
          </Row>
          <Row label="" className="h-[25px]">
            <div className="h-[23px] w-[157px] rounded-[3px] border border-[#66686a] bg-[#434546]" />
            <span className="ml-[8px] mt-[5px] h-[10px] w-[10px] rounded-full bg-[#c6c8c9]" />
          </Row>
        </div>
        <div className="h-[199px] w-[6px] bg-[#252525]" />
      </div>
    </section>
  );
}

function StatusBar() {
  return (
    <footer className="flex h-[27px] items-stretch border-t border-[#58595b] bg-[#4b4c4e] text-[12.500px] tracking-[-0.380px] text-[#dcdddd]">
      <span className="flex w-[33px] items-center border-r border-[#5b5d5f] pl-[7px]">
        <svg width="15" height="15" viewBox="0 0 15 15" fill="none" stroke="#dc4a3c"><path d="M7.500 .7L13.500 3.800V10.800L7.500 14.200L1.500 10.800V3.800ZM1.500 3.800L7.500 7L13.500 3.800M7.500 7V14.200" /></svg>
      </span>
      <span className="flex w-[73px] items-center gap-[2px] border-r border-[#5b5d5f] pl-[7px]"><Uml kind="model" /><span className="mb-[1px]">Model1</span></span>
      <span className="flex w-[291px] items-center gap-[2px] whitespace-nowrap border-r border-[#5b5d5f] pl-[7px]">
        <Uml kind="subject" />
        <span className="mb-[1px] text-[#3d6df0]">Library Management System <span className="text-[11px] tracking-[-0.450px] text-[#939597]">[UMLUseCaseSubject]</span></span>
      </span>
      <span className="flex-1" />
      <span className="flex w-[34px] items-center justify-center border-x border-[#5b5d5f]">
        <svg width="15" height="15" viewBox="0 0 15 15"><circle cx="7.500" cy="7.500" r="7.300" fill="#71cb35" /><path d="M3.500 7.500L6.500 10.500L11.500 5" fill="none" stroke="#3e4a3a" strokeWidth="2.400" /></svg>
      </span>
      <span className="flex w-[56px] items-center pb-[1px] pl-[13px]">100%</span>
    </footer>
  );
}

export default function App() {
  return (
    <div className={"flex h-[900px] w-[1440px] flex-col overflow-hidden bg-[#3b3f41] " + SANS}>
      <TopBar />
      <div className="flex flex-1">
        <Dock />
        <main className="flex w-[1368px] flex-col">
          <TitleBar />
          <MenuBar />
          <div className="flex h-[784px]">
            <LeftColumn />
            <div className="flex w-[868px] pt-[14px]">
              <Canvas />
              <SideTools />
            </div>
            <aside className="w-[300px] text-[12.500px] tracking-[-0.380px] text-[#dcdddd]">
              <Explorer />
              <Editors />
            </aside>
          </div>
          <StatusBar />
        </main>
      </div>
    </div>
  );
}
